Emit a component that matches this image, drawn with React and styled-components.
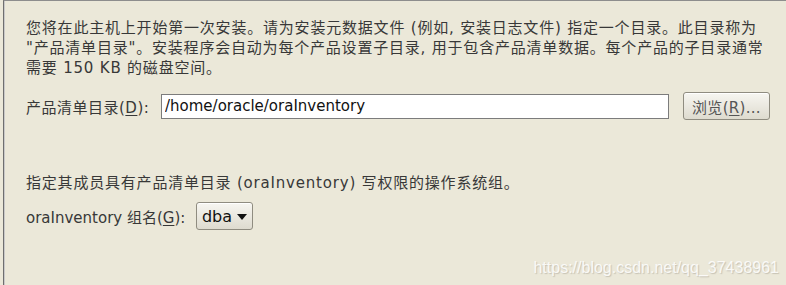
import React from "react";
import styled, { createGlobalStyle } from "styled-components";

const BEIGE = "#ebe8d9";
const TEXT = "#383838";
const FONT = `"DejaVu Sans", "Noto Sans CJK SC", sans-serif`;

const GlobalStyle = createGlobalStyle`
  html, body {
    margin: 0;
    padding: 0;
    background: ${BEIGE};
  }
`;

const Frame = styled.div`
  position: relative;
  box-sizing: border-box;
  height: 285px;
  margin-left: 3px;
  border-top: 1px solid #8d8d8d;
  border-left: 1px solid #6f6f6f;
  box-shadow: inset 1px 0 0 #c9c9c9;
  padding: 17px 0 0 22px;
  font-family: ${FONT};
  font-size: 15px;
  color: ${TEXT};
  overflow: hidden;
`;

const Para = styled.p`
  margin: 0;
  line-height: 20px;
  white-space: nowrap;
  letter-spacing: 0.8px;
  margin-top: ${(p) => p.$top || "0px"};
`;

const Row = styled.div`
  display: flex;
  align-items: center;
  margin-top: ${(p) => p.$top || "0px"};
`;

const Label = styled.label`
  width: ${(p) => p.$width};
  flex: none;
  white-space: nowrap;
  letter-spacing: ${(p) => p.$spacing || "0px"};
`;

const U = styled.span`
  text-decoration: underline;
  text-underline-offset: 2px;
`;

const PathInput = styled.input`
  box-sizing: border-box;
  width: 508px;
  height: 25px;
  margin: 0;
  padding: 0 3px;
  border: 1px solid #7c7c7c;
  background: #ffffff;
  font-family: ${FONT};
  font-size: 15px;
  color: #111;
  outline: none;
`;

const Button = styled.button`
  box-sizing: border-box;
  height: 28px;
  width: ${(p) => p.$width};
  margin: 0 0 0 ${(p) => p.$left || "0px"};
  padding: 0 ${(p) => p.$pad || "8px"};
  display: flex;
  align-items: center;
  justify-content: center;
  gap: ${(p) => p.$gap || "0px"};
  border: 1px solid #8f8c80;
  border-radius: 3px;
  background: linear-gradient(#f7f6f1, #dedbcf);
  box-shadow: inset 0 1px 0 #ffffff;
  font-family: ${FONT};
  font-size: ${(p) => p.$size || "15px"};
  color: ${(p) => p.$color || "#555"};
  white-space: nowrap;
`;

const Caption = styled.span`
  letter-spacing: 0.3px;
`;

const Arrow = styled.span`
  width: 0;
  height: 0;
  border-left: 5px solid transparent;
  border-right: 5px solid transparent;
  border-top: 6px solid #111;
  margin-top: 2px;
`;

const Watermark = styled.div`
  position: absolute;
  right: 7px;
  bottom: 8px;
  font-family: "Liberation Sans", Arial, sans-serif;
  font-size: 16px;
  color: rgba(255, 255, 255, 0.85);
  text-shadow: 1px 1px 1px rgba(90, 85, 70, 0.25);
  white-space: nowrap;
`;

export default function App() {
  return (
    <>
      <GlobalStyle />
      <Frame>
        <Para>
          您将在此主机上开始第一次安装。请为安装元数据文件 (例如, 安装日志文件) 指定一个目录。此目录称为
          <br />
          "产品清单目录"。安装程序会自动为每个产品设置子目录, 用于包含产品清单数据。每个产品的子目录通常
          <br />
          需要 150 KB 的磁盘空间。
        </Para>
        <Row $top="14px">
          <Label $width="135px" $spacing="0.5px">
            产品清单目录(<U>D</U>):
          </Label>
          <PathInput defaultValue="/home/oracle/oraInventory" />
          <Button $width="87px" $left="14px">
            <Caption>
              浏览(<U>R</U>)...
            </Caption>
          </Button>
        </Row>
        <Para $top="53px">
          指定其成员具有产品清单目录 (oraInventory) 写权限的操作系统组。
        </Para>
        <Row $top="9px">
          <Label $width="170px">
            oraInventory 组名(<U>G</U>):
          </Label>
          <Button $width="57px" $pad="4px" $gap="5px" $size="16px" $color="#111">
            <span>dba</span>
            <Arrow />
          </Button>
        </Row>
        <Watermark>https://blog.csdn.net/qq_37438961</Watermark>
      </Frame>
    </>
  );
}
